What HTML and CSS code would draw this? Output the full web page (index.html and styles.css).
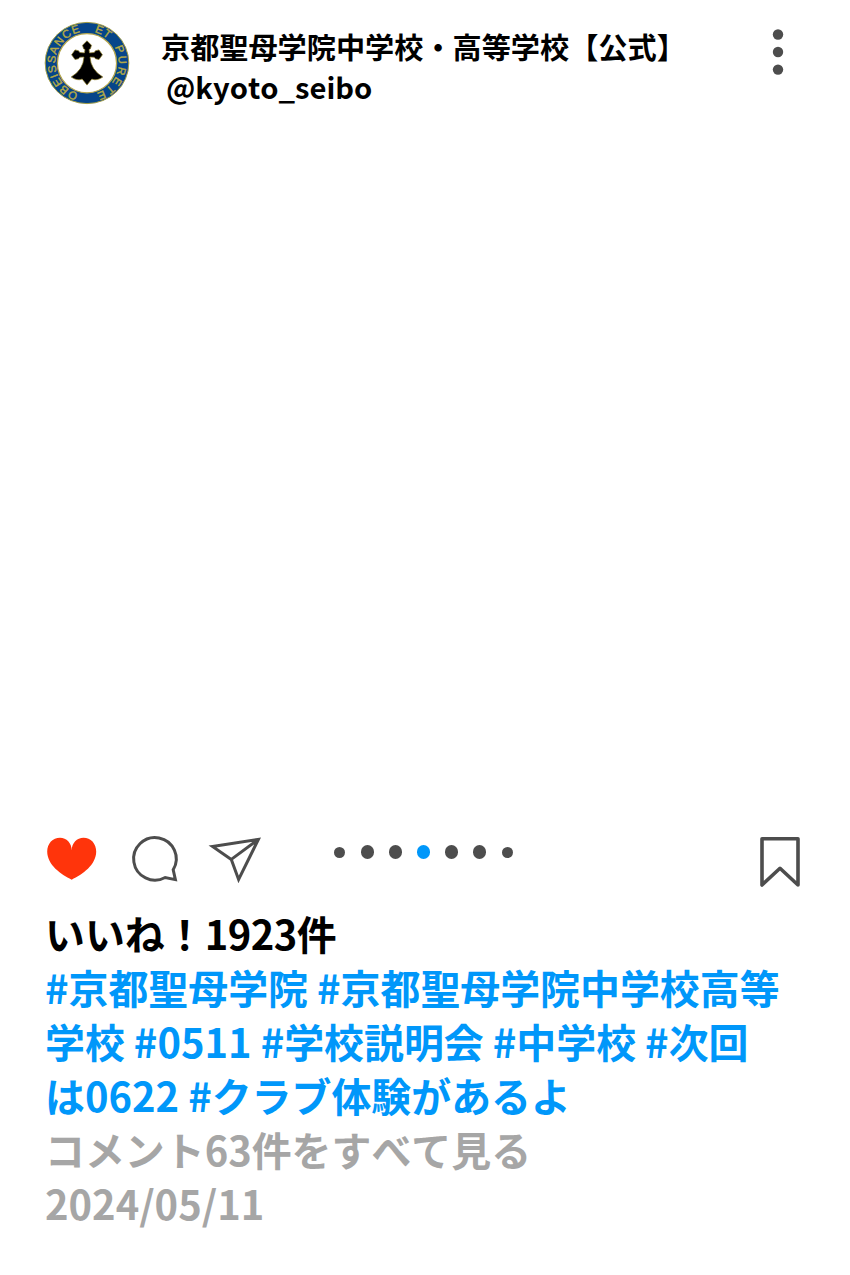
FILE: index.html
```html
<!DOCTYPE html>
<html lang="ja">
<head>
<meta charset="utf-8">
<title>京都聖母学院中学校・高等学校【公式】</title>
<link rel="stylesheet" href="styles.css">
</head>
<body>
<article class="post">
  <header class="header">
    <svg class="avatar" viewBox="0 0 86 84">
      <defs>
        <path id="ring" d="M43 42 m-31.6 0 a31.6 31.6 0 1 1 63.2 0 a31.6 31.6 0 1 1 -63.2 0" transform="rotate(-74 43 42)"/>
      </defs>
      <ellipse cx="43" cy="42" rx="41.8" ry="40.6" fill="#06458a" stroke="#a39d45" stroke-width="1"/>
      <circle cx="43" cy="42.2" r="29.6" fill="#fff" stroke="#b5a64c" stroke-width="1.3"/>
      <text class="motto" letter-spacing="1.1"><textPath href="#ring">OBEISSANCE</textPath></text>
      <text class="motto" letter-spacing="0.8"><textPath href="#ring" startOffset="97.6">ET</textPath></text>
      <text class="motto" letter-spacing="2.1"><textPath href="#ring" startOffset="123">PURETE</textPath></text>
      <path transform="translate(0 1.3)" d="M43 18.5 L47.5 23 L46.4 26.5 L45 27.2 L45.5 30.6 L50.2 30.2 L51.5 28.4 L55 27.6 L58.4 32.5 L55 37.2 L51.5 36.5 L50.2 34.9 L46 34.7 Q46.7 47.5 58.8 54.7 Q53 58.8 47.8 56.8 L43 62.8 L38.2 56.8 Q33 58.8 27.2 54.7 Q39.3 47.5 40 34.7 L35.8 34.9 L34.5 36.5 L31 37.2 L27.6 32.5 L31 27.6 L34.5 28.4 L35.8 30.2 L40.5 30.6 L41 27.2 L39.6 26.5 L38.5 23 Z" fill="#000" stroke="#8d7c27" stroke-width=".7"/>
    </svg>
    <div class="account">
      <h1 class="name">京都聖母学院中学校・高等学校【公式】</h1>
      <p class="handle">@kyoto_seibo</p>
    </div>
    <svg class="more" viewBox="0 0 12 48">
      <circle cx="6" cy="6.5" r="5.2"/><circle cx="6" cy="24" r="5.2"/><circle cx="6" cy="41.6" r="5.2"/>
    </svg>
  </header>
  <div class="photo"></div>
  <div class="actions">
    <svg class="heart" viewBox="0 0 50 44"><path d="M24.7 42.7 C14 37.5 .2 28 .2 14.6 C.2 6.5 5.8 .8 13 .8 C19.5 .8 24.7 6 24.7 13.5 C24.7 6 30 .8 36.5 .8 C43.7 .8 49.2 6.5 49.2 14.6 C49.2 28 35.5 37.5 24.7 42.7Z"/></svg>
    <svg class="comment" viewBox="0 0 48 48"><path d="M41.2 34.8 A21.3 21.3 0 1 0 33.2 42.5 L43.4 44.6 Z"/></svg>
    <svg class="send" viewBox="0 0 54 48"><path d="M3.5 11.4 L49.4 4.4 L29.6 44.4 L22.3 24.4 Z M22.3 24.4 L49.4 4.4"/></svg>
    <div class="pager">
      <i class="dot small"></i><i class="dot"></i><i class="dot"></i><i class="dot active"></i><i class="dot"></i><i class="dot"></i><i class="dot small"></i>
    </div>
    <svg class="bookmark" viewBox="0 0 42 52"><path d="M3 3.8 H39 V50 L21 33.3 L3 50 Z"/></svg>
  </div>
  <div class="caption">
    <p class="likes">いいね！<span class="count">1923</span>件</p>
    <p class="tags">#京都聖母学院 #京都聖母学院中学校高等<br>学校 #0511 #学校説明会 #中学校 #次回<br>は0622 #クラブ体験があるよ</p>
    <p class="muted">コメント63件をすべて見る</p>
    <p class="muted">2024/05/11</p>
  </div>
</article>
</body>
</html>
```
FILE: styles.css
```css
* { box-sizing: border-box; }
body { margin: 0; background: #fff; }
h1, p { margin: 0; font-weight: inherit; font-size: inherit; }
svg { display: block; flex: none; overflow: visible; }
.post {
  width: 850px;
  height: 1275px;
  display: flex;
  flex-direction: column;
  font-family: "Noto Sans CJK JP", sans-serif;
  font-weight: 700;
  font-kerning: none;
  text-spacing-trim: space-all;
  color: #000;
}
.header {
  display: flex;
  align-items: flex-start;
  height: 128px;
  padding: 21px 66px 0 44px;
}
.avatar { width: 86px; height: 84px; }
.motto {
  font: 400 11.3px "Liberation Sans", sans-serif;
  fill: #b5aa45;
  stroke: #b5aa45;
  stroke-width: .4px;
}
.account {
  flex: 1;
  padding: 5px 0 0 31px;
  font-size: 29.17px;
  line-height: 40px;
  white-space: nowrap;
}
.handle { padding-left: 5px; }
.more { width: 12px; height: 48px; margin: 7px 0 0; fill: #4d4d4d; }
.photo { height: 707px; }
.actions {
  display: flex;
  align-items: flex-start;
  height: 71px;
  padding: 0 49px 0 47px;
}
.heart { width: 50px; height: 44px; margin-top: 2px; fill: #ff340b; }
.comment, .send, .bookmark {
  fill: none;
  stroke: #4d4d4d;
  stroke-width: 3;
}
.comment { width: 48px; height: 48px; margin-left: 35px; }
.send { width: 54px; height: 48px; margin-left: 29px; }
.pager {
  display: flex;
  align-items: center;
  gap: 14.1px;
  height: 34px;
  margin-left: 69.6px;
}
.dot {
  width: 13.9px;
  height: 13.9px;
  border-radius: 50%;
  background: #4d4d4d;
}
.dot.small { width: 11px; height: 11px; margin: 0 1.45px; }
.active { background: #0097fa; }
.bookmark { width: 42px; height: 52px; margin-left: auto; stroke-width: 3.6; stroke-linejoin: round; }
.caption {
  padding-left: 45px;
  font-size: 39.92px;
  line-height: 54px;
  white-space: nowrap;
}
.count { letter-spacing: -.5px; }
.tags { color: #0097fa; }
.muted { color: #a6a6a6; }
```
